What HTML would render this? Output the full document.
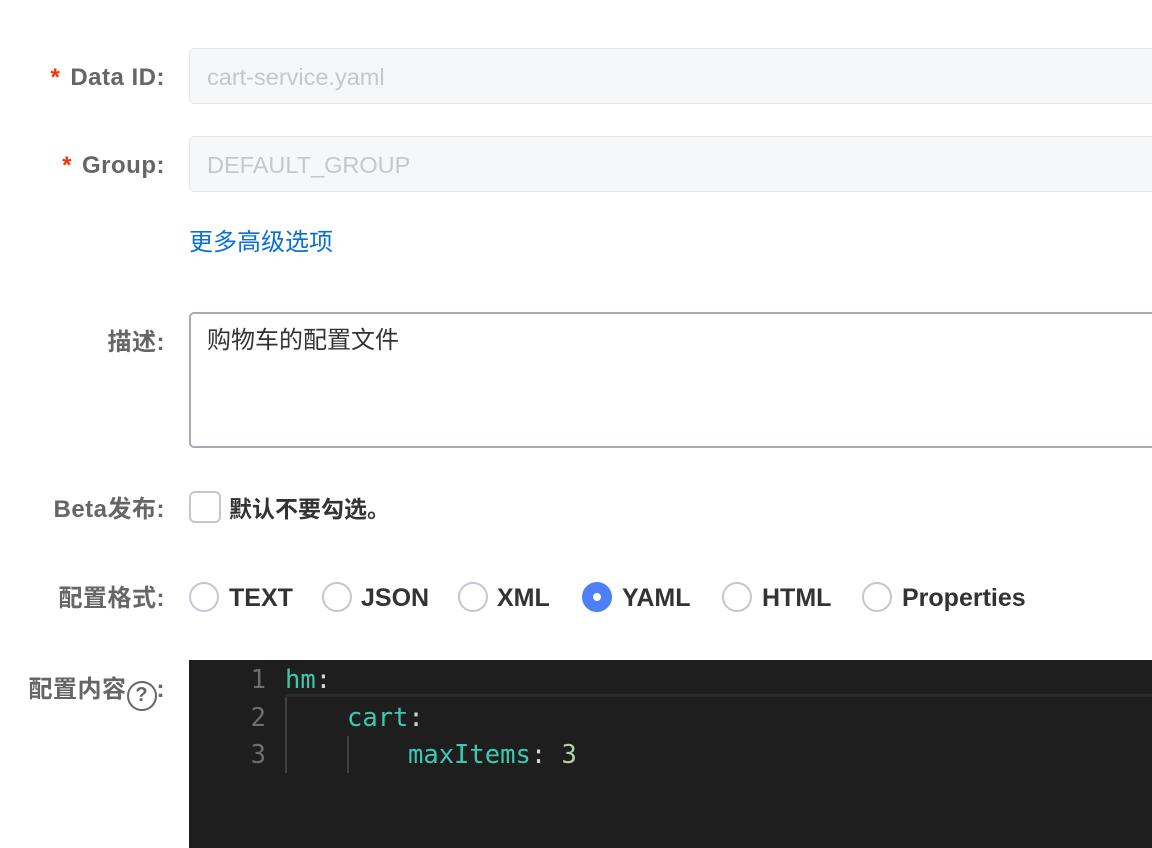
<!DOCTYPE html>
<html><head><meta charset="utf-8"><style>
body{margin:0;width:1152px;height:848px;overflow:hidden;background:#fff;position:relative;font-family:"Liberation Sans","Noto Sans CJK SC",sans-serif}
.lbl{position:absolute;right:987px;font-size:24px;font-weight:bold;color:#666;white-space:nowrap;line-height:30px;letter-spacing:0.5px}
.star{color:#ff3000;margin-right:10px}
.inp{position:absolute;left:189px;width:980px;background:#f6f7f9;border:1px solid #e4e6eb;border-radius:5px;box-sizing:border-box;color:#c5c7cc;font-size:23.5px;padding-left:17px}
.radio{position:absolute;top:582px;width:30px;height:30px;border:2px solid #c4c6cf;border-radius:50%;box-sizing:border-box}
.rt{position:absolute;top:583px;font-size:25px;font-weight:bold;color:#333;line-height:30px}
.code{position:absolute;left:189px;top:660px;width:970px;height:188px;background:#1e1e1e;font-family:"DejaVu Sans Mono","Liberation Mono",monospace;font-size:25.5px}
.ln{position:absolute;left:0;width:77px;text-align:right;color:#6e6e6e;line-height:38px}
.c{position:absolute;line-height:38px;color:#d4d4d4;white-space:pre}
.k{color:#3dc9b0}.n{color:#b5cea8}
</style></head><body>
<div class="lbl" style="top:63px"><span class="star">*</span>Data ID:</div>
<div class="inp" style="top:48px;height:56px;line-height:56px">cart-service.yaml</div>
<div class="lbl" style="top:151px"><span class="star">*</span>Group:</div>
<div class="inp" style="top:136px;height:56px;line-height:56px">DEFAULT_GROUP</div>
<div style="position:absolute;left:189px;top:228px;font-size:24px;color:#0a6fd6;line-height:30px">更多高级选项</div>
<div class="lbl" style="top:328px">描述:</div>
<div style="position:absolute;left:189px;top:312px;width:980px;height:136px;border:2px solid #a8abb5;border-radius:5px;box-sizing:border-box;font-size:24px;color:#333;padding:12px 16px;line-height:30px">购物车的配置文件</div>
<div class="lbl" style="top:495px">Beta发布:</div>
<div style="position:absolute;left:189px;top:491px;width:32px;height:32px;border:2px solid #c4c6cf;border-radius:6px;box-sizing:border-box"></div>
<div style="position:absolute;left:229px;top:494px;font-size:23px;font-weight:bold;color:#333;line-height:30px">默认不要勾选。</div>
<div class="lbl" style="top:584px">配置格式:</div>
<div class="radio" style="left:189px"></div><div class="rt" style="left:229px">TEXT</div>
<div class="radio" style="left:322px"></div><div class="rt" style="left:361px">JSON</div>
<div class="radio" style="left:458px"></div><div class="rt" style="left:497px">XML</div>
<div class="radio" style="left:582px;background:#4d7ff8;border-color:#4d7ff8"><div style="position:absolute;left:9px;top:9px;width:8px;height:8px;background:#fff;border-radius:50%"></div></div><div class="rt" style="left:622px">YAML</div>
<div class="radio" style="left:722px"></div><div class="rt" style="left:762px">HTML</div>
<div class="radio" style="left:862px"></div><div class="rt" style="left:902px">Properties</div>
<div class="lbl" style="top:675px">配置内容<span style="display:inline-block;width:30px;height:30px;border:2.5px solid #666;border-radius:50%;box-sizing:border-box;font-size:20px;line-height:25px;text-align:center;vertical-align:-4px;letter-spacing:0">?</span>:</div>
<div class="code">
<div style="position:absolute;left:96px;top:2px;right:0;height:32px;border-bottom:3px solid #2a2a2a"></div>
<div style="position:absolute;left:96px;top:37px;width:2px;height:76px;background:#404040"></div>
<div style="position:absolute;left:158px;top:76px;width:2px;height:37px;background:#404040"></div>
<div class="ln" style="top:1px">1</div><div class="ln" style="top:39px">2</div><div class="ln" style="top:76px">3</div>
<div class="c" style="left:96px;top:1px"><span class="k">hm</span>:</div>
<div class="c" style="left:158px;top:39px"><span class="k">cart</span>:</div>
<div class="c" style="left:219px;top:76px"><span class="k">maxItems</span>: <span class="n">3</span></div>
</div>
</body></html>
